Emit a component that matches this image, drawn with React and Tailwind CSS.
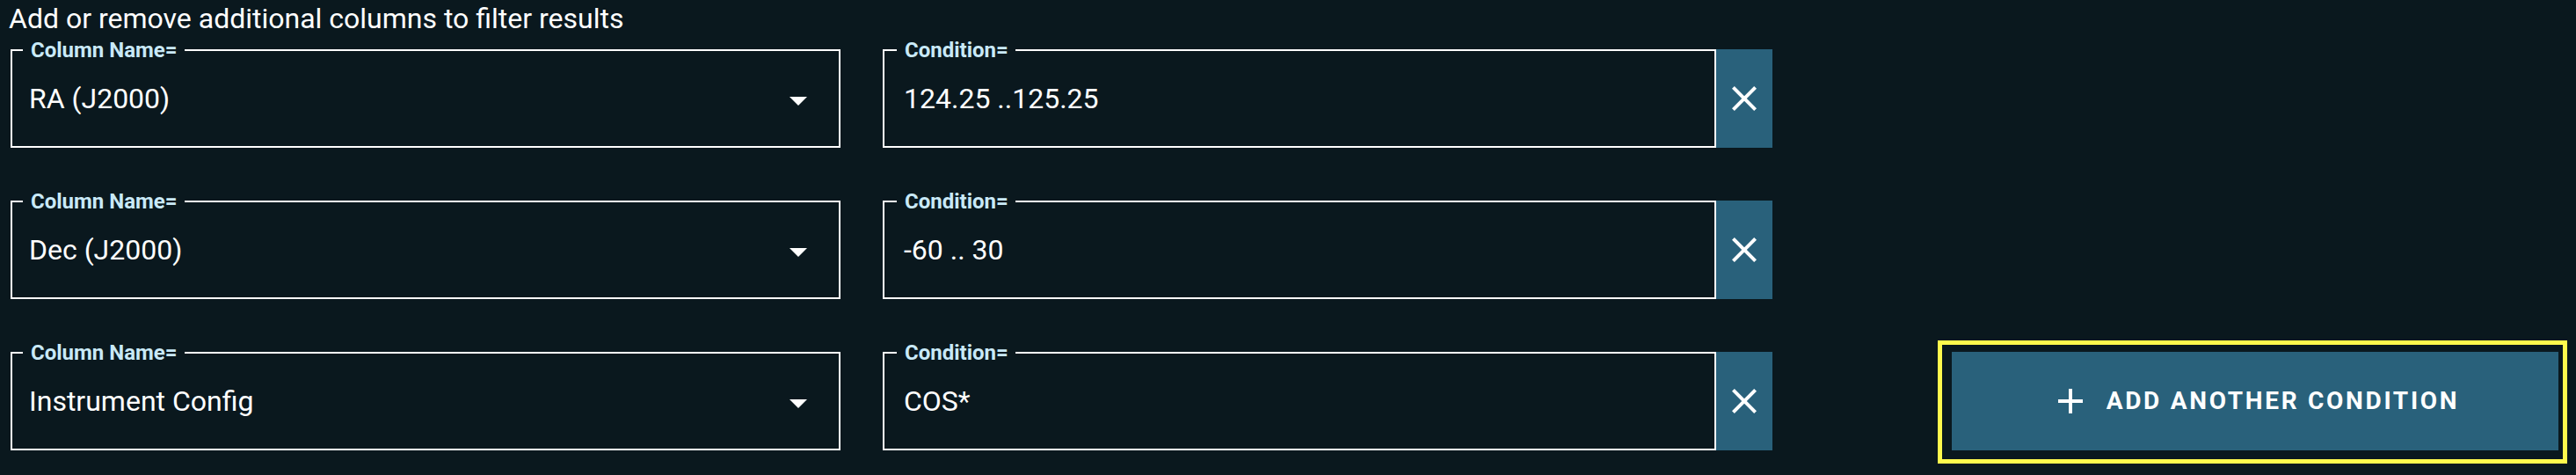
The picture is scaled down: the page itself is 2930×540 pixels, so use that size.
import React from "react";

const rows = [
  { column: "RA (J2000)", condition: "124.25 ..125.25" },
  { column: "Dec (J2000)", condition: "-60 .. 30" },
  { column: "Instrument Config", condition: "COS*" },
];

function OutlinedBox({ label, value, width, labelLeft, valuePad, children }) {
  return (
    <div className={`relative ${width} h-[112px] border-2 border-white flex items-center shrink-0`}>
      <span
        className={`absolute -top-[13px] ${labelLeft} pl-[9px] pr-[8px] bg-[#0a181e] text-[24px] leading-[24px] font-bold text-[#c9e9f7]`}
      >
        {label}
      </span>
      <span className={`flex-1 ${valuePad} text-[32px] leading-[40px] text-white`}>{value}</span>
      {children}
    </div>
  );
}

function CloseIcon() {
  return (
    <svg width="48" height="48" viewBox="0 0 24 24" fill="#ffffff">
      <path d="M19 6.41 17.59 5 12 10.59 6.41 5 5 6.41 10.59 12 5 17.59 6.41 19 12 13.41 17.59 19 19 17.59 13.41 12z" />
    </svg>
  );
}

function AddIcon() {
  return (
    <svg width="48" height="48" viewBox="0 0 24 24" fill="#ffffff">
      <path d="M19 13h-6v6h-2v-6H5v-2h6V5h2v6h6v2z" />
    </svg>
  );
}

export default function App() {
  return (
    <div className="w-[2930px] h-[540px] bg-[#0a181e] font-[Roboto,sans-serif] overflow-hidden">
      <p className="pl-[10px] text-[32px] leading-[42px] text-white">
        Add or remove additional columns to filter results
      </p>

      <div className="mt-[14px] pl-[12px] flex flex-col gap-[60px]">
        {rows.map((row, i) => (
          <div key={row.column} className="flex items-start">
            <OutlinedBox
              label="Column Name="
              value={row.column}
              width="w-[944px]"
              labelLeft="left-[12px]"
              valuePad="pl-[19px]"
            >
              <svg width="20" height="10" viewBox="0 0 20 10" className="mr-[36px] mt-[6px]">
                <polygon points="0,0 20,0 10,10" fill="#ffffff" />
              </svg>
            </OutlinedBox>

            <div className="ml-[48px] flex">
              <OutlinedBox
                label="Condition="
                value={row.condition}
                width="w-[948px]"
                labelLeft="left-[14px]"
                valuePad="pl-[22px]"
              />
              <button className="w-[64px] h-[112px] bg-[#29617b] flex items-center justify-center">
                <CloseIcon />
              </button>
            </div>

            {i === 2 && (
              <div className="ml-[188px] -mt-[13px] border-[5px] border-[#fff94d] pt-[8px] pb-[10px] pl-[11px] pr-[5px]">
                <button className="w-[690px] h-[112px] bg-[#29617b] flex items-center justify-center text-white">
                  <span className="-ml-[2px] mr-[17px] flex">
                    <AddIcon />
                  </span>
                  <span className="text-[28px] leading-[32px] font-bold tracking-[2.7px]">ADD ANOTHER CONDITION</span>
                </button>
              </div>
            )}
          </div>
        ))}
      </div>
    </div>
  );
}
